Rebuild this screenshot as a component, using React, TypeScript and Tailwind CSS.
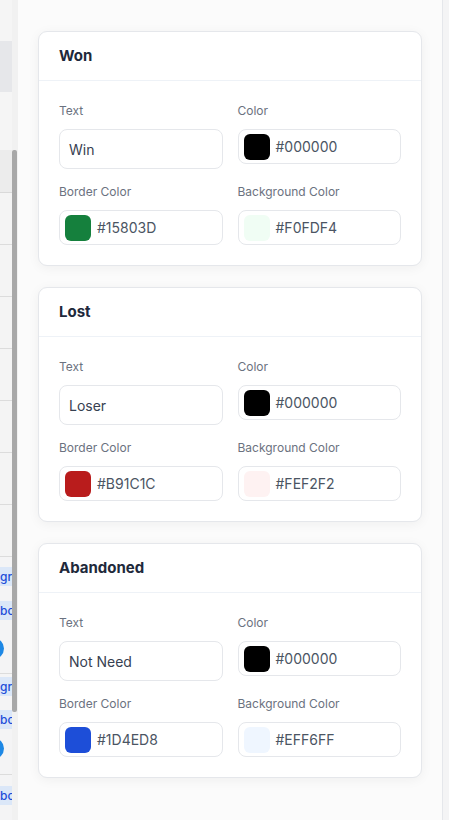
import React from 'react';

type Status = {
    title: string;
    text: string;
    color: string;
    border: string;
    background: string;
};

const statuses: Status[] = [
    { title: 'Won', text: 'Win', color: '#000000', border: '#15803D', background: '#F0FDF4' },
    { title: 'Lost', text: 'Loser', color: '#000000', border: '#B91C1C', background: '#FEF2F2' },
    { title: 'Abandoned', text: 'Not Need', color: '#000000', border: '#1D4ED8', background: '#EFF6FF' },
];

function ColorInput({ value }: { value: string }) {
    return (
        <div className="flex h-[35px] items-center gap-[6px] rounded-[8px] border border-[#e5e7eb] bg-white pl-[5px]">
            <span className="h-[26px] w-[26px] rounded-[6px]" style={{ backgroundColor: value }} />
            <span className="text-[14px] text-[#4b5563]">{value}</span>
        </div>
    );
}

function Field({ label, children }: { label: string; children: React.ReactNode }) {
    return (
        <div className="flex flex-col">
            <label className="mb-[10px] text-[12px] leading-[16px] text-[#6b7280]">{label}</label>
            {children}
        </div>
    );
}

function StatusCard({ s }: { s: Status }) {
    return (
        <section className="rounded-[9px] border border-[#e5e7eb] bg-white shadow-[0_2px_12px_rgba(0,0,0,0.05)]">
            <div className="flex h-[49px] items-center border-b border-[#eef2f7] px-5">
                <h2 className="text-[15px] font-bold text-[#1e293b]">{s.title}</h2>
            </div>
            <div className="grid grid-cols-2 items-start gap-x-[15px] gap-y-[15px] px-5 pt-[22px] pb-[20px]">
                <Field label="Text">
                    <div className="flex h-[40px] items-center rounded-[8px] border border-[#e5e7eb] bg-white px-[9px] text-[14px] text-[#374151]">
                        {s.text}
                    </div>
                </Field>
                <Field label="Color">
                    <ColorInput value={s.color} />
                </Field>
                <Field label="Border Color">
                    <ColorInput value={s.border} />
                </Field>
                <Field label="Background Color">
                    <ColorInput value={s.background} />
                </Field>
            </div>
        </section>
    );
}

function Chip({ text }: { text: string }) {
    return (
        <div className="flex h-[19px] w-[12px] items-center overflow-hidden whitespace-nowrap bg-[#dbe7f8] text-[12px] font-medium leading-none text-[#1d4ed8]">
            <span>{text}</span>
        </div>
    );
}

function Dot() {
    return (
        <div className="h-[21px] w-[4px] overflow-hidden">
            <div className="-ml-[17px] h-[21px] w-[21px] rounded-full bg-[#1e88e5]" />
        </div>
    );
}

export default function App() {
    return (
        <main className="flex h-[820px] w-[449px] overflow-hidden bg-white" style={{ fontFamily: 'Inter, "Noto Sans", sans-serif' }}>
            {/* page behind the drawer */}
            <div className="flex w-[12px] shrink-0 flex-col bg-[#f4f4f5]">
                <div className="h-[41px] bg-[#f5f5f5]" />
                <div className="h-[51px] bg-[#e6e7ea]" />
                <div className="h-[58px] bg-[#f5f5f5]" />
                <div className="h-[43px] border-b border-[#d9d9d9] bg-[#ececec]" />
                {[0, 1, 2, 3, 4, 5, 6].map((i) => (
                    <div key={i} className="h-[52px] border-b border-[#dcdcdc] bg-[#f4f4f4]" />
                ))}
                <div className="flex flex-col gap-[15px] pt-[10px]">
                    <Chip text="gr" />
                    <Chip text="bo" />
                </div>
                <div className="mt-[18px]"><Dot /></div>
                <div className="mt-[14px] border-t border-[#dcdcdc] pt-[3px]">
                    <Chip text="gr" />
                    <div className="mt-[14px]"><Chip text="bo" /></div>
                </div>
                <div className="mt-[9px]"><Dot /></div>
                <div className="mt-[15px] border-t border-[#dcdcdc] pt-[11px]">
                    <Chip text="bo" />
                </div>
            </div>
            <div className="flex w-[6px] shrink-0 flex-col bg-[#f1f1f1] pt-[150px]">
                <div className="h-[562px] w-[5px] rounded-[2px] bg-[#a8a8a8]" />
            </div>

            {/* drawer */}
            <div className="flex w-[424px] shrink-0 flex-col gap-[21px] bg-[#fbfbfb] px-5 pt-[31px]">
                {statuses.map((s) => (
                    <StatusCard key={s.title} s={s} />
                ))}
            </div>
            <div className="w-[7px] shrink-0 border-l border-[#e5e7eb] bg-[#f4f4f5]" />
        </main>
    );
}
